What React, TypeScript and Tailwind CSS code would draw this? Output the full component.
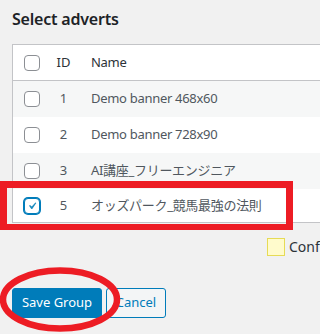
import type { ReactNode } from 'react';

interface AdvertRow {
  id: number;
  name: string;
  checked: boolean;
}

const adverts: AdvertRow[] = [
  { id: 1, name: 'Demo banner 468x60', checked: false },
  { id: 2, name: 'Demo banner 728x90', checked: false },
  { id: 3, name: 'AI講座_フリーエンジニア', checked: false },
  { id: 5, name: 'オッズパーク_競馬最強の法則', checked: true },
];

function Checkbox({ checked }: { checked: boolean }) {
  if (checked) {
    return (
      <span className="flex size-4 items-center justify-center rounded-[4px] border border-[#007cba] bg-white shadow-[0_0_0_1px_#007cba]">
        <svg viewBox="0 0 20 20" className="size-[20px] text-[#1e8cbe]" fill="currentColor">
          <path d="M14.83 4.89l1.34.94-5.81 8.38H9.02L5.78 9.67l1.34-1.25 2.57 2.4z" />
        </svg>
      </span>
    );
  }
  return <span className="block size-4 rounded-[4px] border border-[#8c8f94] bg-white" />;
}

function Row({ children, className }: { children: ReactNode; className: string }) {
  return <div className={`grid grid-cols-[37px_27px_1fr] items-center ${className}`}>{children}</div>;
}

export default function App() {
  return (
    <div className="relative h-[334px] w-[320px] overflow-hidden bg-[#f1f1f1] font-['Noto_Sans','Noto_Sans_CJK_JP',sans-serif]">
      <h2 className="px-3 pt-[7px] text-base leading-6 font-semibold tracking-[-0.2px] text-[#1d2327]">Select adverts</h2>

      <div className="mt-[13px] ml-3 w-[330px] border border-[#c3c4c7] bg-white text-[13px]">
        <Row className="h-9 border-b border-[#c3c4c7] bg-white text-[#2c3338]">
          <span className="pl-[11px]">
            <Checkbox checked={false} />
          </span>
          <span className="text-center">ID</span>
          <span className="pl-[14px] tracking-[-0.3px]">Name</span>
        </Row>
        {adverts.map((advert, index) => (
          <Row
            key={advert.id}
            className={`${index === adverts.length - 1 ? 'h-[33px]' : 'h-9'} ${index % 2 === 0 ? 'bg-[#f6f7f7]' : 'bg-white'} text-[#50575e]`}
          >
            <span className="pl-[11px]">
              <Checkbox checked={advert.checked} />
            </span>
            <span className="text-center">{advert.id}</span>
            <span className="pl-[14px] tracking-[-0.3px] whitespace-nowrap">{advert.name}</span>
          </Row>
        ))}
      </div>

      <div className="mt-[14px] flex items-center gap-1 pl-[267px]">
        <span className="block size-[18px] shrink-0 border border-[#e6db55] bg-[#fffbcc]" />
        <span className="text-sm whitespace-nowrap text-[#2c3338]">Confirm</span>
      </div>

      <div className="mt-[31px] flex gap-1 px-3 text-[13px]">
        <button className="h-[30px] w-[90px] rounded-[3px] border border-[#007cba] bg-[#007cba] text-white">Save Group</button>
        <button className="h-[30px] w-[60px] rounded-[3px] border border-[#007cba] bg-[#f3f5f6] text-[#007cba]">Cancel</button>
      </div>

      {/* annotations drawn over the screenshot */}
      <div className="pointer-events-none absolute top-[181px] left-0 h-[49px] w-[293px] border-[7px] border-b-[6px] border-[#ed1c24]" />
      <svg className="pointer-events-none absolute top-[266px] left-0" width="124" height="68" viewBox="0 0 124 68">
        <ellipse cx="60" cy="33.5" rx="57" ry="29" fill="none" stroke="#ed1c24" strokeWidth="6.5" />
      </svg>
    </div>
  );
}
